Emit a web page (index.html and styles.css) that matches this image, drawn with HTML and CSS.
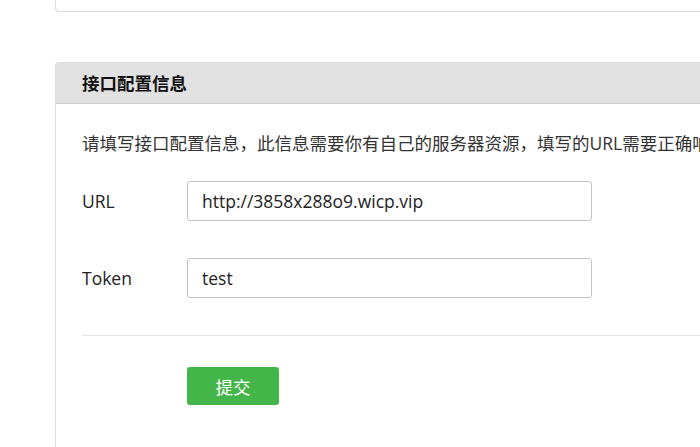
FILE: index.html
```html
<!DOCTYPE html>
<html lang="zh-CN">
<head>
<meta charset="utf-8">
<title>接口配置信息</title>
<link rel="stylesheet" href="styles.css">
</head>
<body>
<div class="page">
  <div class="card card-top"></div>
  <div class="card card-main">
    <div class="card-head">接口配置信息</div>
    <div class="card-body">
      <p class="desc">请填写接口配置信息，此信息需要你有自己的服务器资源，填写的URL需要正确响应</p>
      <div class="form">
        <div class="row">
          <label class="label">URL</label>
          <div class="input">http://3858x288o9.wicp.vip</div>
        </div>
        <div class="row">
          <label class="label">Token</label>
          <div class="input">test</div>
        </div>
      </div>
      <div class="divider"></div>
      <div class="actions">
        <button class="btn">提交</button>
      </div>
    </div>
  </div>
</div>
</body>
</html>
```
FILE: styles.css
```css
* { box-sizing: border-box; }
html, body { margin: 0; padding: 0; background: #fff; }
body {
  font-family: "Open Sans", "Noto Sans CJK SC", sans-serif;
  color: #222;
  font-size: 17.5px;
  overflow: hidden;
  width: 700px;
  height: 447px;
  text-spacing-trim: space-all;
}
.page {
  padding-left: 55px;
  width: 760px;
}
.card {
  border: 1px solid #d9dadc;
  background: #fff;
}
.card-top {
  height: 12px;
  border-top: none;
  border-radius: 0 0 0 4px;
}
.card-main {
  margin-top: 50px;
  border-bottom: none;
  border-radius: 4px 0 0 0;
  height: 420px;
  overflow: hidden;
}
.card-head {
  height: 41px;
  background: #e1e1e1;
  border-bottom: 1px solid #cfcfcf;
  padding-left: 26px;
  font-family: "Noto Sans CJK SC", sans-serif;
  font-size: 17.5px;
  font-weight: bold;
  color: #111;
  line-height: 40px;
}
.card-body {
  padding: 27px 0 0 26px;
}
.desc {
  margin: 0;
  white-space: nowrap;
  line-height: 24px;
  font-size: 17.5px;
  color: #333;
}
.form {
  margin-top: 26px;
  display: flex;
  flex-direction: column;
  gap: 37px;
}
.row {
  display: flex;
  align-items: center;
}
.label {
  width: 105px;
  color: #222;
}
.input {
  width: 405px;
  height: 40px;
  border: 1px solid #c4c4c4;
  border-radius: 3px;
  padding-left: 14px;
  line-height: 38px;
  color: #222;
}
.divider {
  margin-top: 37px;
  height: 1px;
  background: #e7e7e7;
}
.actions {
  padding-top: 31px;
  padding-left: 105px;
}
.btn {
  width: 92px;
  height: 38px;
  border: none;
  border-radius: 3px;
  background: #44b549;
  color: #fff;
  font-family: "Noto Sans CJK SC", sans-serif;
  font-size: 17.5px;
  padding: 0;
}
```
